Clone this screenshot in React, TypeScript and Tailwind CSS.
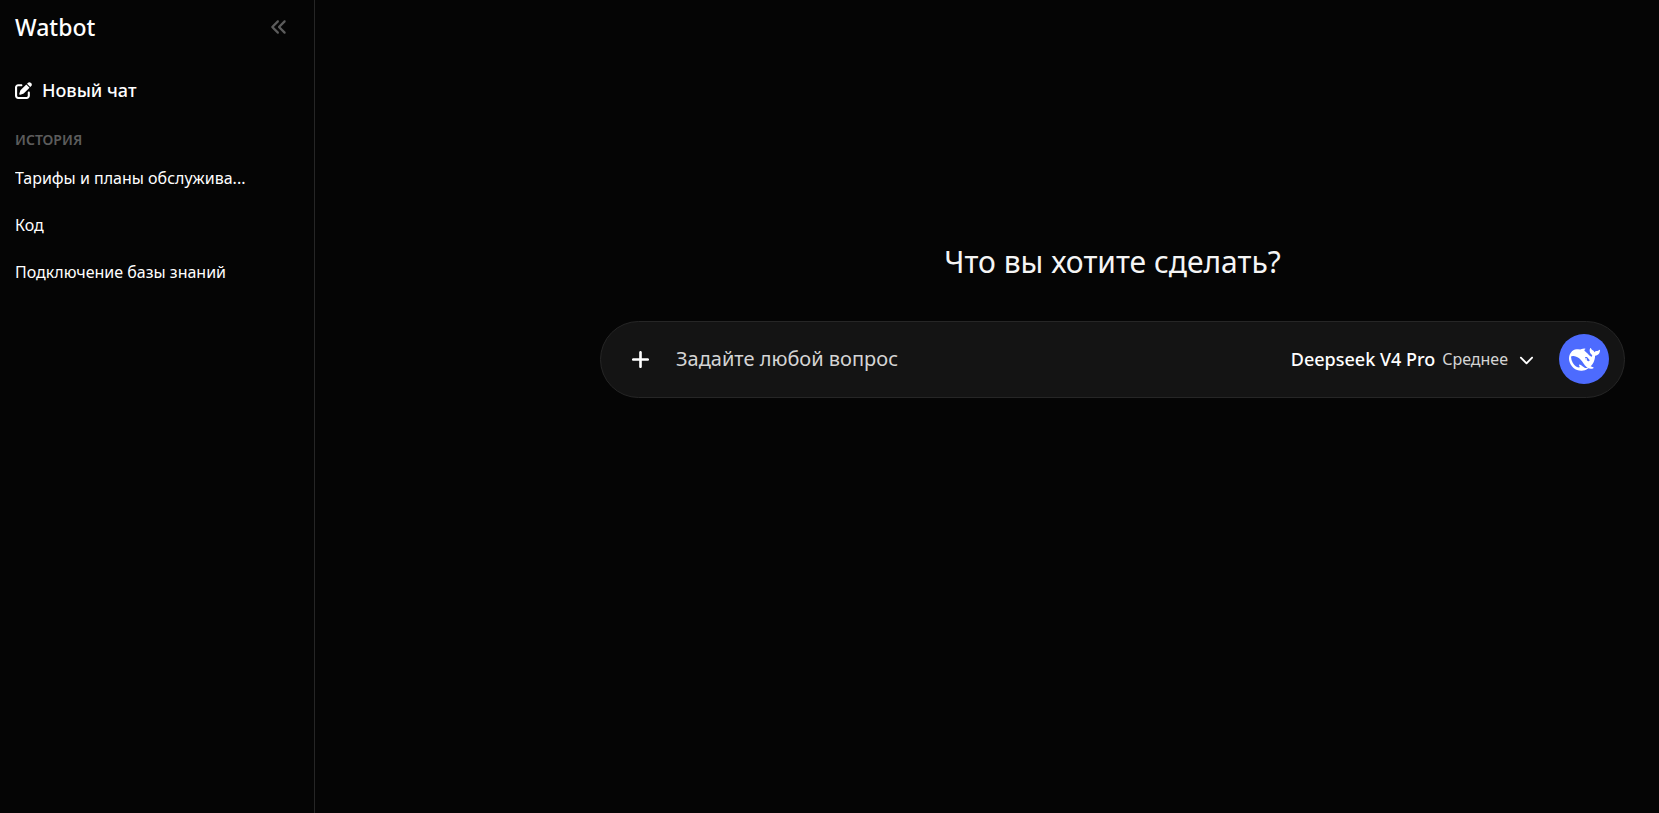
import { FaAnglesLeft, FaChevronDown, FaPenToSquare, FaPlus } from "react-icons/fa6";

interface Chat {
  id: number;
  title: string;
}

const CHATS: Chat[] = [
  { id: 1, title: "Тарифы и планы обслужива..." },
  { id: 2, title: "Код" },
  { id: 3, title: "Подключение базы знаний" },
];

function WhaleIcon() {
  return (
    <svg viewBox="0 0 24 24" className="size-[31px]" fill="currentColor" aria-hidden="true">
      <path d="M23.748 4.482c-.254-.124-.364.113-.512.234-.051.039-.094.09-.137.136-.372.397-.806.657-1.373.626-.829-.046-1.537.214-2.163.848-.133-.782-.575-1.248-1.247-1.548-.352-.156-.708-.311-.955-.65-.172-.241-.219-.51-.305-.774-.055-.16-.11-.323-.293-.35-.2-.031-.278.136-.356.276-.313.572-.434 1.202-.422 1.84.027 1.436.633 2.58 1.838 3.393.137.093.172.187.129.323-.082.28-.18.552-.266.833-.055.179-.137.217-.329.14a5.526 5.526 0 01-1.736-1.18c-.857-.828-1.631-1.742-2.597-2.458a11.365 11.365 0 00-.689-.471c-.985-.957.13-1.743.388-1.836.27-.098.093-.432-.779-.428-.872.004-1.67.295-2.687.684a3.055 3.055 0 01-.465.137 9.597 9.597 0 00-2.883-.102c-1.885.21-3.39 1.102-4.497 2.623C.082 8.606-.231 10.684.152 12.85c.403 2.284 1.569 4.175 3.36 5.653 1.858 1.533 3.997 2.284 6.438 2.14 1.482-.085 3.133-.284 4.994-1.86.47.234.962.327 1.78.397.63.059 1.236-.03 1.705-.128.735-.156.684-.837.419-.961-2.155-1.004-1.682-.595-2.113-.926 1.096-1.296 2.746-2.642 3.392-7.003.05-.347.007-.565 0-.845-.004-.17.035-.237.23-.256a4.173 4.173 0 001.545-.475c1.396-.763 1.96-2.015 2.093-3.517.02-.23-.004-.467-.247-.588zM11.581 18c-2.089-1.642-3.102-2.183-3.52-2.16-.392.024-.321.471-.235.763.09.288.207.486.371.739.114.167.192.416-.113.603-.673.416-1.842-.14-1.897-.167-1.361-.802-2.5-1.86-3.301-3.307-.774-1.393-1.224-2.887-1.298-4.482-.02-.386.093-.522.477-.592a4.696 4.696 0 011.529-.039c2.132.312 3.946 1.265 5.468 2.774.868.86 1.525 1.887 2.202 2.891.72 1.066 1.494 2.082 2.48 2.914.348.292.625.514.891.677-.802.09-2.14.11-3.054-.614zm1-6.44a.306.306 0 01.415-.287.302.302 0 01.2.288.306.306 0 01-.31.307.303.303 0 01-.304-.308zm3.11 1.596c-.2.081-.399.151-.59.16a1.245 1.245 0 01-.798-.254c-.274-.23-.47-.358-.552-.758a1.73 1.73 0 01.016-.588c.07-.327-.008-.537-.239-.727-.187-.156-.426-.199-.688-.199a.559.559 0 01-.254-.078c-.11-.054-.2-.19-.114-.358.028-.054.16-.186.192-.21.356-.202.767-.136 1.146.016.352.144.618.408 1.001.782.391.451.462.576.685.914.176.265.336.537.445.848.067.195-.019.354-.25.452z" />
    </svg>
  );
}

function Sidebar() {
  return (
    <aside className="w-[315px] shrink-0 border-r border-[#262626] pl-[15px] pr-[26px]">
      <div className="flex h-[54px] items-center justify-between">
        <span className="text-[23px] font-medium">Watbot</span>
        <button type="button" aria-label="Свернуть меню" className="text-[#5c5c5c]">
          <FaAnglesLeft className="size-[18px]" />
        </button>
      </div>

      <button type="button" className="mt-5 flex h-8 items-center gap-[10px] text-lg font-medium">
        <FaPenToSquare className="size-[17px]" />
        Новый чат
      </button>

      <h2 className="mt-6 text-sm font-semibold text-[#5c5c5c]">ИСТОРИЯ</h2>

      <nav className="mt-4 flex flex-col gap-[23px]">
        {CHATS.map((chat) => (
          <a key={chat.id} href="#" className="truncate text-base">
            {chat.title}
          </a>
        ))}
      </nav>
    </aside>
  );
}

function Composer() {
  return (
    <form className="flex h-[77px] items-center rounded-full border border-[#262626] bg-[#141414] pb-px pl-[29px] pr-[15px]">
      <button type="button" aria-label="Добавить файл" className="mr-[25px]">
        <FaPlus className="size-[21px]" />
      </button>
      <input
        type="text"
        aria-label="Вопрос"
        placeholder="Задайте любой вопрос"
        className="min-w-0 flex-1 bg-transparent text-xl outline-none placeholder:text-[#d4d4d4]"
      />
      <button type="button" className="mr-[25px] flex items-center">
        <span className="text-lg font-medium">Deepseek V4 Pro</span>
        <span className="ml-[7px] text-base text-[#d4d4d4]">Среднее</span>
        <FaChevronDown className="ml-[11px] size-[15px]" />
      </button>
      <button
        type="submit"
        aria-label="Отправить"
        className="flex size-[50px] items-center justify-center rounded-full bg-[#4d6bfe] text-white"
      >
        <WhaleIcon />
      </button>
    </form>
  );
}

export default function App() {
  return (
    <div className="flex min-h-screen bg-[#050505] font-['Noto_Sans',sans-serif] text-white">
      <Sidebar />
      <main className="flex min-w-0 flex-1 justify-end pl-6 pr-[34px] pt-60">
        <div className="w-full max-w-[1025px]">
          <h1 className="mb-[37px] text-center text-3xl leading-[44px] text-[#f5f5f5]">Что вы хотите сделать?</h1>
          <Composer />
        </div>
      </main>
    </div>
  );
}
